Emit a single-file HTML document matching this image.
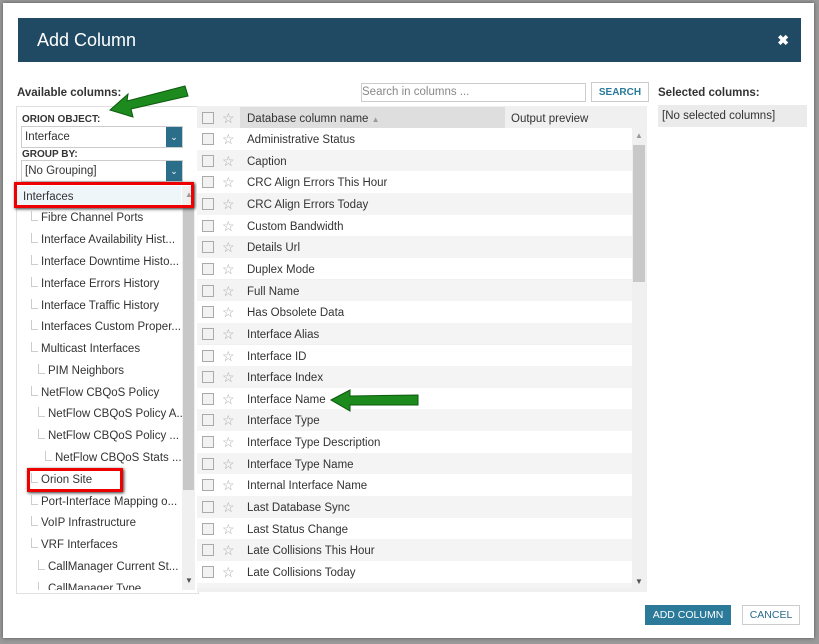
<!DOCTYPE html><html><head><style>
body{margin:0;width:819px;height:644px;background:#9a9a9a;font-family:"Liberation Sans",sans-serif;font-size:11.5px;color:#333;position:relative;overflow:hidden}
.m{position:absolute;left:3px;top:3px;width:811px;height:635px;background:#fff;box-shadow:0 0 4px #555}
.a{position:absolute}
.hd{left:18px;top:18px;width:783px;height:44px;background:#204a63;color:#fff;font-size:18px;line-height:44px}
.lb{font-weight:bold;color:#333}
.row{position:absolute;left:197px;width:435px;height:21.6px;line-height:22px}
.cb{position:absolute;left:5px;top:5px;width:10px;height:10px;border:1px solid #aaa;background:#f2f2f2}
.st{position:absolute;left:25px;top:0;color:#aaa;font-size:14px}
.tx{position:absolute;left:50px;top:1px}
.tr{position:absolute;left:17px;width:165px;height:22px;line-height:23px;white-space:nowrap;overflow:hidden}
.ln{position:absolute;border-left:1px solid #ccc;border-bottom:1px solid #ccc;width:6px;height:9px;top:4px}
</style></head><body>
<div class="m"></div>
<div class="a hd"><span style="position:absolute;left:19px">Add Column</span><span style="position:absolute;right:12px;font-size:14px;font-weight:bold">✖</span></div>
<div class="a lb" style="left:17px;top:87px">Available columns:</div>
<div class="a lb" style="left:658px;top:87px">Selected columns:</div>
<div class="a" style="left:658px;top:105px;width:149px;height:22px;background:#ebebeb;line-height:22px;padding-left:4px;box-sizing:border-box">[No selected columns]</div>
<div class="a" style="left:361px;top:83px;width:223px;height:17px;border:1px solid #ccc;color:#888;line-height:17px;font-size:11.5px">Search in columns ...</div>
<div class="a" style="left:591px;top:82px;width:56px;height:18px;border:1px solid #ccc;color:#2a7a9a;font-weight:bold;font-size:10px;line-height:19px;text-align:center">SEARCH</div>
<div class="a" style="left:16px;top:106px;width:181px;height:486px;border:1px solid #e0e0e0"></div>
<div class="a lb" style="left:22px;top:114px;font-size:10px">ORION OBJECT:</div>
<div class="a" style="left:21px;top:126px;width:160px;height:20px;border:1px solid #ccc;line-height:21px;color:#333"><span style="padding-left:3px">Interface</span><span style="position:absolute;right:0;top:0;width:16px;height:20px;background:#2b6e8a;color:#fff;text-align:center;font-size:9px">⌄</span></div>
<div class="a lb" style="left:22px;top:149px;font-size:10px">GROUP BY:</div>
<div class="a" style="left:21px;top:160px;width:160px;height:20px;border:1px solid #ccc;line-height:21px"><span style="padding-left:3px">[No Grouping]</span><span style="position:absolute;right:0;top:0;width:16px;height:20px;background:#2b6e8a;color:#fff;text-align:center;font-size:9px">⌄</span></div>
<div class="a" style="left:182px;top:186px;width:13px;height:404px;background:#f0f0f0"></div>
<div class="a" style="left:183px;top:208px;width:11px;height:282px;background:#c8c8c8"></div>
<div class="a" style="left:185px;top:190px;color:#999;font-size:8px">▲</div>
<div class="a" style="left:185px;top:576px;color:#555;font-size:8px">▼</div>
<div class="a" style="left:17px;top:186px;width:164px;height:22px;background:#eef6fa;line-height:23px"><span style="padding-left:6px">Interfaces</span></div>
<div class="a" style="left:14px;top:182px;width:180px;height:26px;border:3px solid #e00;box-sizing:border-box;box-shadow:1px 1px 3px #333"></div>
<div class="a" style="left:27px;top:468px;width:96px;height:24px;border:3px solid #e00;box-sizing:border-box;box-shadow:1px 1px 3px #333"></div>
<div class="tr" style="top:207px"><i class="ln" style="left:14px"></i><span style="position:absolute;left:24px">Fibre Channel Ports</span></div>
<div class="tr" style="top:229px"><i class="ln" style="left:14px"></i><span style="position:absolute;left:24px">Interface Availability Hist...</span></div>
<div class="tr" style="top:251px"><i class="ln" style="left:14px"></i><span style="position:absolute;left:24px">Interface Downtime Histo...</span></div>
<div class="tr" style="top:273px"><i class="ln" style="left:14px"></i><span style="position:absolute;left:24px">Interface Errors History</span></div>
<div class="tr" style="top:295px"><i class="ln" style="left:14px"></i><span style="position:absolute;left:24px">Interface Traffic History</span></div>
<div class="tr" style="top:316px"><i class="ln" style="left:14px"></i><span style="position:absolute;left:24px">Interfaces Custom Proper...</span></div>
<div class="tr" style="top:338px"><i class="ln" style="left:14px"></i><span style="position:absolute;left:24px">Multicast Interfaces</span></div>
<div class="tr" style="top:360px"><i class="ln" style="left:21px"></i><span style="position:absolute;left:31px">PIM Neighbors</span></div>
<div class="tr" style="top:382px"><i class="ln" style="left:14px"></i><span style="position:absolute;left:24px">NetFlow CBQoS Policy</span></div>
<div class="tr" style="top:403px"><i class="ln" style="left:21px"></i><span style="position:absolute;left:31px">NetFlow CBQoS Policy A...</span></div>
<div class="tr" style="top:425px"><i class="ln" style="left:21px"></i><span style="position:absolute;left:31px">NetFlow CBQoS Policy ...</span></div>
<div class="tr" style="top:447px"><i class="ln" style="left:28px"></i><span style="position:absolute;left:38px">NetFlow CBQoS Stats ...</span></div>
<div class="tr" style="top:469px"><i class="ln" style="left:14px"></i><span style="position:absolute;left:24px">Orion Site</span></div>
<div class="tr" style="top:491px"><i class="ln" style="left:14px"></i><span style="position:absolute;left:24px">Port-Interface Mapping o...</span></div>
<div class="tr" style="top:512px"><i class="ln" style="left:14px"></i><span style="position:absolute;left:24px">VoIP Infrastructure</span></div>
<div class="tr" style="top:534px"><i class="ln" style="left:14px"></i><span style="position:absolute;left:24px">VRF Interfaces</span></div>
<div class="tr" style="top:556px"><i class="ln" style="left:21px"></i><span style="position:absolute;left:31px">CallManager Current St...</span></div>
<div class="tr" style="top:578px;height:12px"><i class="ln" style="left:21px"></i><span style="position:absolute;left:31px">CallManager Type</span></div>
<div class="a" style="left:197px;top:106px;width:450px;height:486px;background:#f0f0f0"></div>
<div class="a" style="left:240px;top:107px;width:265px;height:21px;background:#dedede"></div>
<div class="row" style="top:107px;width:450px;background:transparent"><i class="cb"></i><span class="st">☆</span><span class="tx">Database column name <span style="color:#999;font-size:8px">▲</span></span><span style="position:absolute;left:314px;top:1px">Output preview</span></div>
<div class="a" style="left:632px;top:128px;width:14px;height:462px;background:#f0f0f0"></div>
<div class="a" style="left:633px;top:145px;width:12px;height:137px;background:#c8c8c8"></div>
<div class="a" style="left:635px;top:131px;color:#999;font-size:8px">▲</div>
<div class="a" style="left:635px;top:577px;color:#555;font-size:8px">▼</div>
<div id="g"></div>
<script>
var n=["Administrative Status","Caption","CRC Align Errors This Hour","CRC Align Errors Today","Custom Bandwidth","Details Url","Duplex Mode","Full Name","Has Obsolete Data","Interface Alias","Interface ID","Interface Index","Interface Name","Interface Type","Interface Type Description","Interface Type Name","Internal Interface Name","Last Database Sync","Last Status Change","Late Collisions This Hour","Late Collisions Today",""];
var h="";n.forEach(function(t,i){var y=128+i*21.65;var hh=i==21?5:21.6;h+='<div class="row" style="top:'+y+'px;height:'+hh+'px;overflow:hidden;background:'+(i%2?'#f4f4f4':'#fff')+'"><i class="cb"></i><span class="st">☆</span><span class="tx">'+t+'</span></div>'});
document.getElementById("g").innerHTML=h;
</script>
<svg class="a" style="left:0;top:0" width="819" height="644">
<g fill="#1d8a1d" stroke="#0d5a0d" stroke-width="1">
<polygon points="110,110 128,94 127,101 185,86 188,96 131,109 133,117"/>
<polygon points="331,400 350,390 350,396 418,395 418,405 350,405 350,411"/>
</g></svg>
<div class="a" style="left:645px;top:605px;width:86px;height:20px;background:#2b7a99;color:#fff;font-size:10.5px;line-height:21px;text-align:center">ADD COLUMN</div>
<div class="a" style="left:742px;top:605px;width:56px;height:18px;border:1px solid #ccc;color:#2a6a8a;font-size:10.5px;line-height:19px;text-align:center">CANCEL</div>
</body></html>
